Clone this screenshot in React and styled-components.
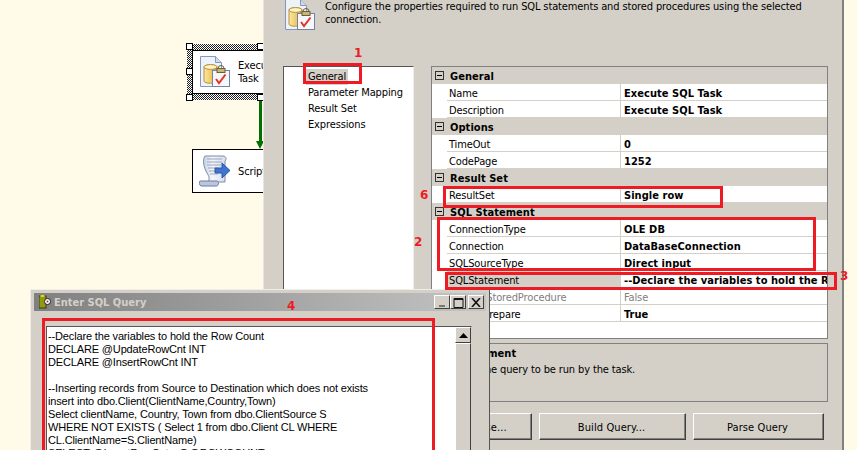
import React from "react";
import styled, { createGlobalStyle } from "styled-components";

const UI_FONT = `"DejaVu Sans Condensed", "DejaVu Sans", sans-serif`;
const FACE = "#d4d0c8";
const CREAM = "#fffbe8";
const RED = "#ed1c24";

const GlobalStyle = createGlobalStyle`
  html, body {
    margin: 0;
    padding: 0;
    background: ${CREAM};
  }
  * {
    box-sizing: border-box;
  }
`;

const sections = [
  {
    title: "General",
    rows: [
      { name: "Name", value: "Execute SQL Task" },
      { name: "Description", value: "Execute SQL Task" },
    ],
  },
  {
    title: "Options",
    rows: [
      { name: "TimeOut", value: "0" },
      { name: "CodePage", value: "1252" },
    ],
  },
  { title: "Result Set", rows: [{ name: "ResultSet", value: "Single row" }] },
  {
    title: "SQL Statement",
    rows: [
      { name: "ConnectionType", value: "OLE DB" },
      { name: "Connection", value: "DataBaseConnection" },
      { name: "SQLSourceType", value: "Direct input" },
      { name: "SQLStatement", value: "--Declare the variables to hold the Row Count", selected: true },
      { name: "IsQueryStoredProcedure", value: "False", disabled: true },
      { name: "BypassPrepare", value: "True" },
    ],
  },
];

const queryLines = [
  "--Declare the variables to hold the Row Count",
  "DECLARE @UpdateRowCnt INT",
  "DECLARE @InsertRowCnt INT",
  "",
  "--Inserting records from Source to Destination which does not exists",
  "insert into dbo.Client(ClientName,Country,Town)",
  "Select clientName, Country, Town from dbo.ClientSource S",
  "WHERE NOT EXISTS ( Select 1 from dbo.Client CL WHERE",
  "CL.ClientName=S.ClientName)",
  "SELECT @InsertRowCnt= @@ROWCOUNT",
];

const marks = [
  { top: 63, left: 303, width: 59, height: 21 },
  { top: 186, left: 443, width: 280, height: 22 },
  { top: 217, left: 437, width: 379, height: 54 },
  { top: 272, left: 445, width: 392, height: 18 },
  { top: 318, left: 42, width: 393, height: 160 },
];

const labels = [
  { text: "1", top: 46, left: 354 },
  { text: "6", top: 188, left: 420 },
  { text: "2", top: 235, left: 414 },
  { text: "3", top: 269, left: 840 },
  { text: "4", top: 299, left: 287 },
];

function TaskIcon() {
  return (
    <svg width="32" height="32" viewBox="0 0 32 32">
      <defs>
        <linearGradient id="drum" x1="0" x2="1" y1="0" y2="0">
          <stop offset="0" stopColor="#fbe9a6" />
          <stop offset="0.6" stopColor="#efc65e" />
          <stop offset="1" stopColor="#c99a3a" />
        </linearGradient>
      </defs>
      <path d="M1.5 0.5h15l6 6v24h-21z" fill="#eef2f9" stroke="#8298bd" />
      <path d="M16.5 0.5v6h6" fill="#cfdaec" stroke="#8298bd" />
      <path d="M5 11c0-3 13-3 13 0v14c0 3-13 3-13 0z" fill="url(#drum)" stroke="#b9923a" />
      <ellipse cx="11.5" cy="11" rx="6.5" ry="2.4" fill="#fdf3c8" stroke="#b9923a" />
      <rect x="13.5" y="14.5" width="17" height="16" fill="#f6f7fa" stroke="#6f84a6" />
      <path d="M19 15v-2.5a3 3 0 0 1 6 0V15" fill="none" stroke="#6e5f36" />
      <rect x="18" y="12.5" width="8" height="4" fill="#c9b47a" stroke="#6e5f36" />
      <path d="M17 23l3 4 6.5-8.5" fill="none" stroke="#e0352b" strokeWidth="2" />
    </svg>
  );
}

function ScriptIcon() {
  return (
    <svg width="32" height="32" viewBox="0 0 32 32">
      <defs>
        <linearGradient id="paper" x1="0" x2="1" y1="0" y2="0">
          <stop offset="0" stopColor="#c5d0e4" />
          <stop offset="0.4" stopColor="#f4f6fa" />
          <stop offset="1" stopColor="#d5dcec" />
        </linearGradient>
      </defs>
      <path d="M6 1h18c3 0 4 3 2 5v21H9c2-3 1-6-1-9C5 13 3 5 6 1z" fill="url(#paper)" stroke="#7d8ba6" />
      <path d="M1 26h17c2 0 2 4 0 5H2c-2-1-2-4-1-5z" fill="#b9c6de" stroke="#6f7f9e" />
      <path d="M8 4h15M8 7h15M8 10h14M9 13h10M10 16h8M11 19h8" stroke="#9aa6bd" />
      <path d="M16 13h7V8l8 7.500-8 7.500v-5h-7z" fill="#3f74d0" stroke="#2b57a8" />
    </svg>
  );
}

function WindowIcon() {
  return (
    <svg width="12" height="14" viewBox="0 0 12 14">
      <rect x="0" y="1" width="7" height="12" fill="#8f9a10" stroke="#3d3d10" />
      <rect x="1.500" y="0" width="4" height="2" fill="#d8d820" />
      <circle cx="8.500" cy="6.500" r="3" fill="#fff" stroke="#222" />
      <circle cx="8.500" cy="6.500" r="1" fill="#c02020" />
    </svg>
  );
}

function GlyphMin() {
  return (
    <svg width="9" height="9" viewBox="0 0 9 9">
      <path d="M1 8h6" stroke="#777" strokeWidth="2" />
    </svg>
  );
}

function GlyphMax() {
  return (
    <svg width="11" height="11" viewBox="0 0 11 11">
      <path d="M1 1.500h9v9h-9zM1 2.500h9" fill="none" stroke="#111" />
    </svg>
  );
}

function GlyphClose() {
  return (
    <svg width="10" height="9" viewBox="0 0 10 9">
      <path d="M1 0l8 9M9 0l-8 9" stroke="#111" strokeWidth="1.600" />
    </svg>
  );
}

export default function App() {
  return (
    <Page>
      <GlobalStyle />
      <Canvas>
        <Hatch />
        {[
          [186, 43],
          [186, 68],
          [186, 94],
          [257, 43],
          [257, 94],
        ].map(([x, y]) => (
          <Handle key={`${x}-${y}`} $x={x} $y={y} />
        ))}
        <Node $top={50} $height={44}>
          <TaskIcon />
          <NodeText>
            Execute SQL
            <br />
            Task
          </NodeText>
        </Node>
        <Connector />
        <ArrowHead />
        <Node $top={149} $height={44}>
          <ScriptIcon />
          <NodeText>Script Task</NodeText>
        </Node>
      </Canvas>

      <Dialog>
        <Header>
          <HeaderIcon>
            <TaskIcon />
          </HeaderIcon>
          <HeaderText>
            Configure the properties required to run SQL statements and stored procedures using the selected
            connection.
          </HeaderText>
        </Header>
        <Body>
          <NavList>
            <NavItem $active>General</NavItem>
            <NavItem>Parameter Mapping</NavItem>
            <NavItem>Result Set</NavItem>
            <NavItem>Expressions</NavItem>
          </NavList>
          <Right>
            <Grid>
              {sections.map((section) => (
                <React.Fragment key={section.title}>
                  <SectionRow>
                    <Toggle />
                    <SectionTitle>{section.title}</SectionTitle>
                  </SectionRow>
                  {section.rows.map((row) => (
                    <PropRow key={row.name}>
                      <PropName $selected={row.selected} $disabled={row.disabled}>
                        {row.name}
                      </PropName>
                      <PropValue $disabled={row.disabled}>{row.value}</PropValue>
                    </PropRow>
                  ))}
                </React.Fragment>
              ))}
            </Grid>
            <HelpPane>
              <HelpTitle>SQLStatement</HelpTitle>
              <HelpText>Specifies the query to be run by the task.</HelpText>
            </HelpPane>
            <Buttons>
              <Button $width={95}>Browse...</Button>
              <Button $width={147}>Build Query...</Button>
              <Button $width={131}>Parse Query</Button>
            </Buttons>
          </Right>
        </Body>
      </Dialog>
      <Gutter />

      <QueryWindow>
        <TitleBar>
          <WindowIcon />
          <TitleText>Enter SQL Query</TitleText>
          <TitleButtons>
            <TitleButton>
              <GlyphMin />
            </TitleButton>
            <TitleButton>
              <GlyphMax />
            </TitleButton>
            <TitleButton $gap>
              <GlyphClose />
            </TitleButton>
          </TitleButtons>
        </TitleBar>
        <EditorRow>
          <Editor>
            {queryLines.map((line, i) => (
              <QueryLine key={i}>{line}</QueryLine>
            ))}
          </Editor>
          <ScrollBar>
            <ScrollUp>
              <svg width="9" height="5" viewBox="0 0 9 5">
                <path d="M4.500 0L9 5H0z" fill="#000" />
              </svg>
            </ScrollUp>
            <ScrollThumb />
          </ScrollBar>
        </EditorRow>
      </QueryWindow>

      {marks.map((m) => (
        <Mark key={`${m.top}-${m.left}`} $top={m.top} $left={m.left} $width={m.width} $height={m.height} />
      ))}
      {labels.map((l) => (
        <Label key={l.text} $top={l.top} $left={l.left}>
          {l.text}
        </Label>
      ))}
    </Page>
  );
}

const Page = styled.div`
  position: relative;
  display: flex;
  width: 857px;
  height: 450px;
  overflow: hidden;
  background: ${CREAM};
  font-family: ${UI_FONT};
  font-size: 11px;
  letter-spacing: -0.13px;
  color: #000;
`;

const Canvas = styled.div`
  position: relative;
  flex: 0 0 263px;
  overflow: hidden;
`;

const Hatch = styled.div`
  position: absolute;
  left: 187px;
  top: 44px;
  width: 80px;
  height: 56px;
  background-color: #fff;
  background-image: conic-gradient(#222 25%, #fff 0 50%, #222 0 75%, #fff 0);
  background-size: 2px 2px;
`;

const Handle = styled.div`
  position: absolute;
  left: ${(p) => p.$x}px;
  top: ${(p) => p.$y}px;
  width: 7px;
  height: 7px;
  background: #fff;
  border: 1px solid #000;
  z-index: 2;
`;

const Node = styled.div`
  position: absolute;
  left: 192px;
  top: ${(p) => p.$top}px;
  width: 110px;
  height: ${(p) => p.$height}px;
  display: flex;
  align-items: center;
  gap: 7px;
  padding-left: 6px;
  background: #fff;
  border: 1px solid #000;
  z-index: 1;
  white-space: nowrap;
`;

const NodeText = styled.div`
  line-height: 13px;
  font-size: 11px;
`;

const Connector = styled.div`
  position: absolute;
  left: 259px;
  top: 101px;
  width: 3px;
  height: 42px;
  background: #007000;
`;

const ArrowHead = styled.div`
  position: absolute;
  left: 256px;
  top: 141px;
  border-left: 4.5px solid transparent;
  border-right: 4.5px solid transparent;
  border-top: 8px solid #007000;
`;

const Dialog = styled.div`
  flex: 0 0 581px;
  display: flex;
  flex-direction: column;
  background: ${FACE};
  border-left: 1px solid #e8e6e0;
  border-right: 2px solid #808080;
`;

const Gutter = styled.div`
  flex: 1;
  background: ${CREAM};
`;

const Header = styled.div`
  display: flex;
  height: 66px;
`;

const HeaderIcon = styled.div`
  width: 61px;
  padding-left: 20px;
  margin-top: -1px;
`;

const HeaderText = styled.div`
  width: 490px;
  line-height: 13px;
`;

const Body = styled.div`
  display: flex;
  gap: 17px;
  padding-left: 19px;
`;

const NavList = styled.div`
  width: 131px;
  height: 340px;
  padding: 2px 0 0 22px;
  background: #fff;
  border: 1px solid;
  border-color: #555 #eee #eee #555;
`;

const NavItem = styled.div`
  width: fit-content;
  height: 16px;
  line-height: 16px;
  padding: 0 2px;
  background: ${(p) => (p.$active ? FACE : "transparent")};
`;

const Right = styled.div`
  width: 397px;
`;

const Grid = styled.div`
  height: 273px;
  background: #fff;
  border: 1px solid #808080;
`;

const SectionRow = styled.div`
  display: flex;
  align-items: center;
  height: 17px;
  padding-left: 3px;
  background: ${FACE};
`;

const Toggle = styled.div`
  position: relative;
  width: 9px;
  height: 9px;
  border: 1px solid #333;
  &::after {
    content: "";
    position: absolute;
    left: 1px;
    top: 3px;
    width: 5px;
    height: 1px;
    background: #000;
  }
`;

const SectionTitle = styled.div`
  margin-left: 6px;
  padding-top: 2px;
  font-weight: 700;
  letter-spacing: 0.05px;
`;

const PropRow = styled.div`
  display: grid;
  grid-template-columns: 174px 1fr;
  height: 17px;
  margin-left: 15px;
  background: #fff;
  border-bottom: 1px solid ${FACE};
  line-height: 19px;
`;

const PropName = styled.div`
  height: 16px;
  padding-left: 2px;
  border-right: 1px solid ${FACE};
  background: ${(p) => (p.$selected ? FACE : "#fff")};
  color: ${(p) => (p.$disabled ? "#808080" : "#000")};
  white-space: nowrap;
`;

const PropValue = styled.div`
  height: 16px;
  padding-left: 3px;
  font-weight: ${(p) => (p.$disabled ? 400 : 700)};
  letter-spacing: ${(p) => (p.$disabled ? "-0.13px" : "0.05px")};
  color: ${(p) => (p.$disabled ? "#808080" : "#000")};
  white-space: nowrap;
  overflow: hidden;
`;

const HelpPane = styled.div`
  height: 59px;
  margin-top: 4px;
  padding: 2px 3px;
  border: 1px solid #808080;
  line-height: 16px;
`;

const HelpTitle = styled.div`
  font-weight: 700;
  letter-spacing: 0.05px;
`;

const HelpText = styled.div``;

const Buttons = styled.div`
  display: flex;
  gap: 7px;
  margin: 11px 0 0 6px;
`;

const Button = styled.div`
  width: ${(p) => p.$width}px;
  height: 27px;
  padding-right: 2px;
  line-height: 27px;
  letter-spacing: 0.1px;
  text-align: center;
  background: ${FACE};
  border: 1px solid;
  border-color: #fff #404040 #404040 #fff;
  box-shadow: inset -1px -1px 0 #808080;
`;

const QueryWindow = styled.div`
  position: absolute;
  left: 30px;
  top: 289px;
  width: 460px;
  height: 170px;
  display: flex;
  flex-direction: column;
  padding: 3px 3px 0;
  background: ${FACE};
  border: 1px solid;
  border-color: #f0eee8 #555 #555 #f0eee8;
  z-index: 3;
`;

const TitleBar = styled.div`
  display: flex;
  align-items: center;
  flex: 0 0 18px;
  padding: 0 2px 0 5px;
  background: linear-gradient(90deg, #808080, #c4c4c4);
`;

const TitleText = styled.div`
  margin-left: 3px;
  font-weight: 700;
  letter-spacing: 0;
  color: ${FACE};
`;

const TitleButtons = styled.div`
  display: flex;
  margin-left: auto;
`;

const TitleButton = styled.div`
  display: flex;
  align-items: center;
  justify-content: center;
  width: 16px;
  height: 14px;
  margin-left: ${(p) => (p.$gap ? "2px" : "0")};
  background: ${FACE};
  border: 1px solid;
  border-color: #fff #404040 #404040 #fff;
`;

const EditorRow = styled.div`
  display: flex;
  margin: 15px 0 0 12px;
  width: 426px;
  height: 130px;
  background: #fff;
  border: 1px solid;
  border-color: #555 ${FACE} ${FACE} #555;
`;

const Editor = styled.div`
  flex: 1;
  padding: 2px 0 0 1px;
  font-family: "Liberation Sans", sans-serif;
  font-size: 11px;
  letter-spacing: -0.15px;
`;

const QueryLine = styled.div`
  height: 13px;
  line-height: 15px;
  white-space: nowrap;
`;

const ScrollBar = styled.div`
  flex: 0 0 16px;
  display: flex;
  flex-direction: column;
`;

const ScrollUp = styled.div`
  display: flex;
  align-items: center;
  justify-content: center;
  height: 16px;
  background: ${FACE};
  border: 1px solid;
  border-color: #fff #404040 #404040 #fff;
`;

const ScrollThumb = styled.div`
  flex: 1;
  background: ${FACE};
  border: 1px solid;
  border-color: #fff #404040 #404040 #fff;
`;

const Mark = styled.div`
  position: absolute;
  left: ${(p) => p.$left}px;
  top: ${(p) => p.$top}px;
  width: ${(p) => p.$width}px;
  height: ${(p) => p.$height}px;
  border: 3px solid ${RED};
  z-index: 4;
`;

const Label = styled.div`
  position: absolute;
  left: ${(p) => p.$left}px;
  top: ${(p) => p.$top}px;
  font-family: "DejaVu Sans", sans-serif;
  font-size: 12px;
  font-weight: 700;
  letter-spacing: 0;
  color: ${RED};
  z-index: 4;
`;
